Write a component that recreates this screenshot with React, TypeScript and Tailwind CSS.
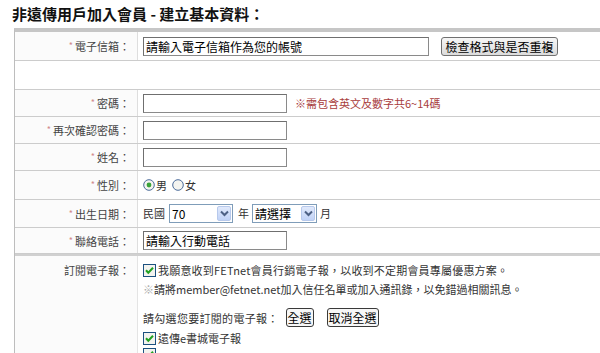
import React from "react";

function Star() {
  return <span className="text-[#d08a8a] text-[9px] mr-[2px] align-[2px]">*</span>;
}

function Label({ text, star = true }: { text: string; star?: boolean }) {
  return (
    <div className="w-[123px] shrink-0 border-r border-[#dedede] bg-[#fbfbfb] flex items-center justify-end pr-[7px] text-[11px] leading-[16px] text-[#444]">
      {star && <Star />}
      <span>{text}</span>
    </div>
  );
}

function Row({ h, label, star = true, children }: { h: string; label: string; star?: boolean; children?: React.ReactNode }) {
  return (
    <div className={`flex ${h} border-b border-[#cccccc]`}>
      <Label text={label} star={star} />
      <div className="flex-1 flex items-center pl-[5px]">{children}</div>
    </div>
  );
}

function TextBox({ w, value = "" }: { w: string; value?: string }) {
  return (
    <div className={`${w} h-[19px] border border-[#8a8a8a] border-t-[#6f6f6f] border-l-[#6f6f6f] bg-white text-[12px] leading-[17px] pl-[2px] text-black whitespace-nowrap overflow-hidden`}>
      {value}
    </div>
  );
}

function Select({ w, value }: { w: string; value: string }) {
  return (
    <div className={`${w} h-[19px] border border-[#7f9db9] bg-white flex items-center justify-between pl-[2px] pr-[1px] text-[12px] text-black`}>
      <span className="leading-[17px]">{value}</span>
      <div className="w-[14px] h-[15px] rounded-[2px] border border-[#b7c9ec] bg-gradient-to-b from-[#e0e9fb] to-[#c1d3f7] flex items-center justify-center">
        <svg width="9" height="7" viewBox="0 0 9 7">
          <path d="M1 1.5 L4.5 5 L8 1.5" stroke="#4d6185" strokeWidth="2" fill="none" />
        </svg>
      </div>
    </div>
  );
}

function Radio({ checked }: { checked?: boolean }) {
  return (
    <svg width="12" height="12" viewBox="0 0 12 12" className="shrink-0">
      <circle cx="6" cy="6" r="5.3" fill="#f4f4f0" stroke="#4a6b9a" strokeWidth="1" />
      {checked && <circle cx="6" cy="6" r="2.4" fill="#3aa23a" />}
    </svg>
  );
}

function Check() {
  return (
    <svg width="13" height="13" viewBox="0 0 13 13" className="shrink-0">
      <rect x="0.5" y="0.5" width="12" height="12" fill="#f3f3ef" stroke="#1c5180" />
      <path d="M3 6.3 L5.3 8.8 L10 3.8" stroke="#21a121" strokeWidth="2" fill="none" />
    </svg>
  );
}

function Btn({ children, w }: { children: React.ReactNode; w: string }) {
  return (
    <div className={`${w} h-[19px] border border-[#3a3a3a] rounded-[3px] bg-[#f7f7f7] text-[12px] leading-[17px] text-black flex items-center justify-center`}>
      {children}
    </div>
  );
}

export default function App() {
  return (
    <div className="w-[600px] h-[353px] overflow-hidden bg-white font-['Noto_Sans_CJK_TC','Noto_Sans',sans-serif] text-[#333]">
      <div className="h-[28px] pl-[12px] pt-[5px] text-[15px] leading-[18px] font-bold text-[#111]">
        非遠傳用戶加入會員 - 建立基本資料：
      </div>
      <div className="ml-[14px] border-l border-[#bdbdbd] border-t-4 border-t-[#c6c6c6]">
        <Row h="h-[29px]" label="電子信箱：">
          <TextBox w="w-[286px]" value="請輸入電子信箱作為您的帳號" />
          <div className="ml-[12px] w-[117px] h-[19px] border border-[#707070] rounded-[3px] bg-gradient-to-b from-[#f6f6f6] to-[#dcdcdc] text-[12px] leading-[17px] text-black flex items-center justify-center">
            檢查格式與是否重複
          </div>
        </Row>
        <div className="h-[29px] border-b border-[#cccccc]" />
        <Row h="h-[27px]" label="密碼：">
          <TextBox w="w-[144px]" />
          <span className="ml-[8px] text-[11px] text-[#a83c3c]">※需包含英文及數字共6~14碼</span>
        </Row>
        <Row h="h-[27px]" label="再次確認密碼：">
          <TextBox w="w-[144px]" />
        </Row>
        <Row h="h-[27px]" label="姓名：">
          <TextBox w="w-[144px]" />
        </Row>
        <Row h="h-[29px]" label="性別：">
          <div className="flex items-center text-[11px] leading-[16px] text-[#333]">
            <Radio checked />
            <span className="ml-[1px]">男</span>
            <span className="ml-[5px]"><Radio /></span>
            <span className="ml-[1px]">女</span>
          </div>
        </Row>
        <Row h="h-[28px]" label="出生日期：">
          <div className="flex items-center text-[11px] text-[#333]">
            <span>民國</span>
            <div className="ml-[4px]"><Select w="w-[64px]" value="70" /></div>
            <span className="ml-[5px]">年</span>
            <div className="ml-[3px]"><Select w="w-[65px]" value="請選擇" /></div>
            <span className="ml-[3px]">月</span>
          </div>
        </Row>
        <Row h="h-[26px]" label="聯絡電話：">
          <TextBox w="w-[144px]" value="請輸入行動電話" />
        </Row>
        <div className="flex border-t-2 border-[#d0d0d0] h-[120px]">
          <div className="w-[123px] shrink-0 border-r border-[#e4e4e4] bg-[#fbfbfb] text-right pr-[7px] pt-[6px] text-[11px] leading-[16px] text-[#444]">
            訂閱電子報：
          </div>
          <div className="flex-1 pl-[5px] pt-[6px] text-[11px] leading-[16px] text-[#333]">
            <div className="flex items-center h-[16px]">
              <Check />
              <span className="ml-[2px] whitespace-nowrap tracking-[0.2px]">我願意收到FETnet會員行銷電子報，以收到不定期會員專屬優惠方案。</span>
            </div>
            <div className="mt-[3px] h-[16px] whitespace-nowrap">
              <span className="text-[#aaa]">※</span>請將member@fetnet.net加入信任名單或加入通訊錄，以免錯過相關訊息。
            </div>
            <div className="mt-[11px] flex items-center h-[19px]">
              <span className="tracking-[0.3px]">請勾選您要訂閱的電子報：</span>
              <div className="ml-[7px]"><Btn w="w-[28px]">全選</Btn></div>
              <div className="ml-[13px]"><Btn w="w-[52px]">取消全選</Btn></div>
            </div>
            <div className="mt-[3px] flex items-center h-[16px]">
              <Check />
              <span className="ml-[2px]">遠傳e書城電子報</span>
            </div>
            <div className="mt-[2px] flex items-center h-[13px] overflow-hidden">
              <Check />
            </div>
          </div>
        </div>
      </div>
    </div>
  );
}
